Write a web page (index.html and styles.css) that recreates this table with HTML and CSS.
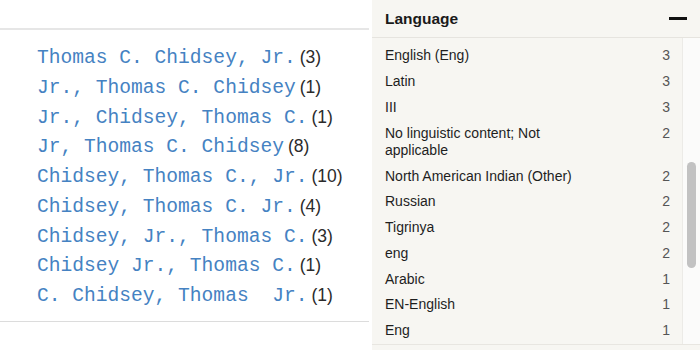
FILE: index.html
```html
<!DOCTYPE html>
<html>
<head>
<meta charset="utf-8">
<link rel="stylesheet" href="styles.css">
</head>
<body>
<div class="page">
  <section class="left">
    <ul class="names">
      <li><a class="name">Thomas C. Chidsey, Jr.</a> <span class="cnt">(3)</span></li>
      <li><a class="name">Jr., Thomas C. Chidsey</a> <span class="cnt">(1)</span></li>
      <li><a class="name">Jr., Chidsey, Thomas C.</a> <span class="cnt">(1)</span></li>
      <li><a class="name">Jr, Thomas C. Chidsey</a> <span class="cnt">(8)</span></li>
      <li><a class="name">Chidsey, Thomas C., Jr.</a> <span class="cnt">(10)</span></li>
      <li><a class="name">Chidsey, Thomas C. Jr.</a> <span class="cnt">(4)</span></li>
      <li><a class="name">Chidsey, Jr., Thomas C.</a> <span class="cnt">(3)</span></li>
      <li><a class="name">Chidsey Jr., Thomas C.</a> <span class="cnt">(1)</span></li>
      <li><a class="name">C. Chidsey, Thomas&nbsp; Jr.</a> <span class="cnt">(1)</span></li>
    </ul>
  </section>
  <aside class="facet">
    <div class="facet-head">
      <h2>Language</h2>
      <span class="minus"></span>
    </div>
    <div class="facet-body">
      <ul class="facet-list">
        <li><span class="lbl">English (Eng)</span><span class="num">3</span></li>
        <li><span class="lbl">Latin</span><span class="num">3</span></li>
        <li><span class="lbl">III</span><span class="num">3</span></li>
        <li><span class="lbl">No linguistic content; Not applicable</span><span class="num">2</span></li>
        <li><span class="lbl">North American Indian (Other)</span><span class="num">2</span></li>
        <li><span class="lbl">Russian</span><span class="num">2</span></li>
        <li><span class="lbl">Tigrinya</span><span class="num">2</span></li>
        <li><span class="lbl">eng</span><span class="num">2</span></li>
        <li><span class="lbl">Arabic</span><span class="num">1</span></li>
        <li><span class="lbl">EN-English</span><span class="num">1</span></li>
        <li><span class="lbl">Eng</span><span class="num">1</span></li>
      </ul>
      <div class="scrollbar"><div class="thumb"></div></div>
    </div>
  </aside>
</div>
</body>
</html>
```

FILE: styles.css
```css
html, body {
  margin: 0;
  padding: 0;
  background: #ffffff;
}
.page {
  width: 700px;
  height: 350px;
  display: flex;
  gap: 3px;
  overflow: hidden;
}
.left {
  width: 369px;
  flex: none;
  padding-top: 28px;
}
.names {
  list-style: none;
  margin: 0;
  padding: 13px 0 10px 37px;
  border-top: 2px solid #e6e6e6;
  border-bottom: 1px solid #dcdcdc;
}
.names li {
  line-height: 29.75px;
  height: 29.75px;
  white-space: nowrap;
}
.name {
  font-family: "Liberation Mono", "Courier New", monospace;
  font-size: 19.6px;
  color: #4582c2;
}
.cnt {
  font-family: "Liberation Sans", Arial, sans-serif;
  font-size: 17.5px;
  color: #2b2b2b;
}
.facet {
  flex: 1;
  background: #f7f6f2;
  font-family: "Liberation Sans", Arial, sans-serif;
  color: #1e1e1e;
  height: 350px;
}
.facet-head {
  height: 38px;
  border-bottom: 1px solid #e6e4df;
  display: flex;
  align-items: center;
  justify-content: space-between;
  padding: 0 13px 0 13px;
  box-sizing: border-box;
}
.facet-head h2 {
  margin: 0;
  font-size: 15.5px;
  font-weight: bold;
  color: #1a1a1a;
}
.minus {
  width: 18px;
  height: 3.5px;
  background: #111;
}
.facet-body {
  display: flex;
  height: 306px;
  border-bottom: 1px solid #e8e6e1;
  overflow: hidden;
}
.facet-list {
  list-style: none;
  margin: 0;
  padding: 5px 0 0 0;
  flex: 1;
}
.facet-list li {
  display: flex;
  justify-content: space-between;
  align-items: flex-start;
  padding: 4.4px 12px 4.4px 13px;
  line-height: 17px;
  font-size: 14px;
}
.lbl {
  max-width: 70%;
}
.num {
  color: #555;
}
.scrollbar {
  width: 17px;
  flex: none;
  background: #fbfbfa;
  border-left: 1px solid #ecebe7;
  display: flex;
  justify-content: center;
}
.thumb {
  width: 9px;
  height: 106px;
  margin-top: 124px;
  border-radius: 5px;
  background: #c2c2c2;
}
```
